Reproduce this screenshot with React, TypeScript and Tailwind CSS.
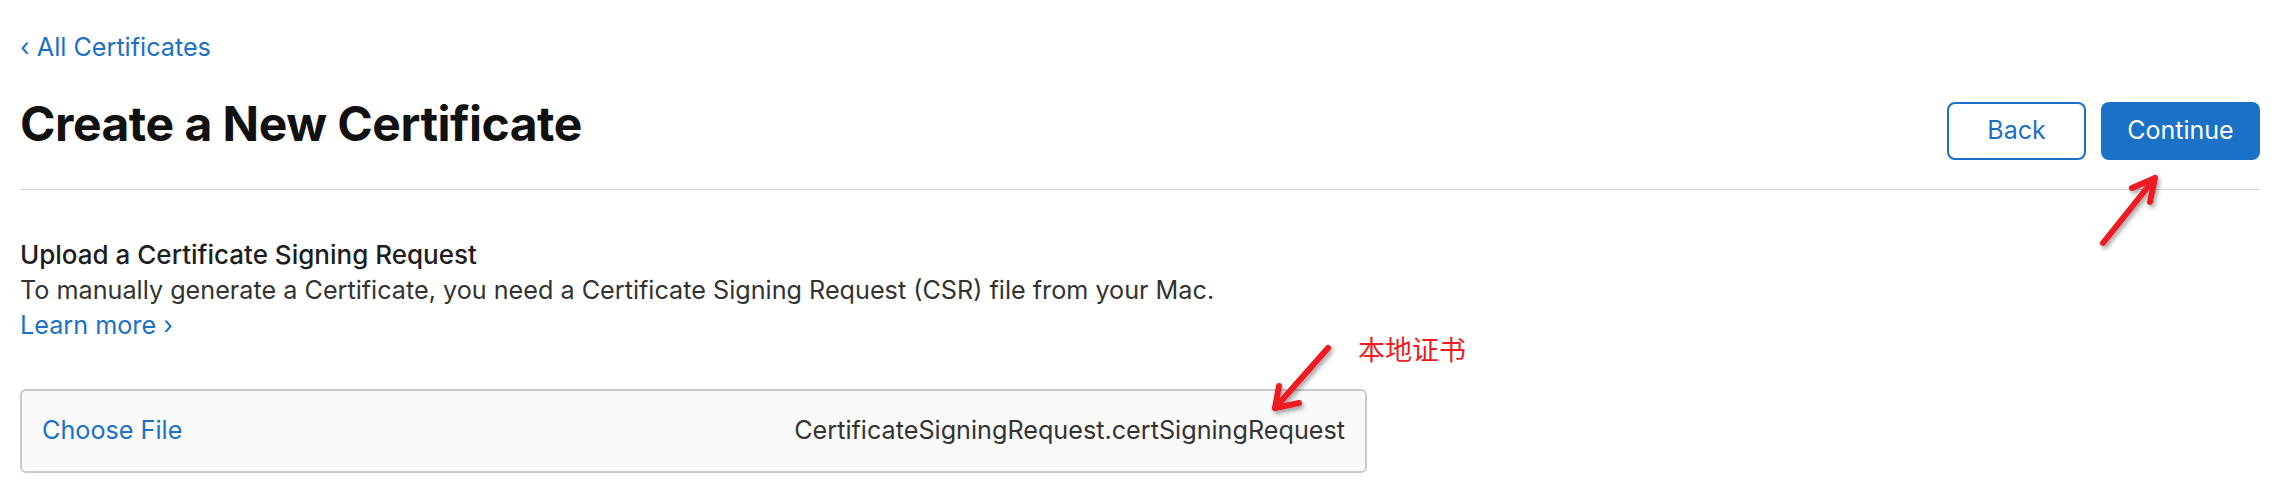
import React from 'react';

const blue = 'text-[#1a71c6]';

function Arrows() {
  return (
    <svg
      className="pointer-events-none absolute left-0 top-0"
      width="2292"
      height="504"
      viewBox="0 0 2292 504"
    >
      <defs>
        <filter id="shadow" x="-20%" y="-20%" width="140%" height="140%">
          <feDropShadow dx="2" dy="3" stdDeviation="2" floodColor="#000" floodOpacity="0.35" />
        </filter>
      </defs>
      <g
        stroke="#ec1c24"
        strokeWidth="6"
        strokeLinecap="round"
        strokeLinejoin="round"
        fill="none"
        filter="url(#shadow)"
      >
        {/* arrow to Continue */}
        <path d="M2103 243 L2155 178" />
        <path d="M2132 188 L2155 178 L2150 202" />
        {/* arrow to file name */}
        <path d="M1328 348 L1275 408" />
        <path d="M1279 386 L1275 408 L1299 403" />
      </g>
    </svg>
  );
}

export default function App() {
  return (
    <div
      className="relative min-h-[504px] w-[2292px] overflow-hidden bg-white pl-[20px] pr-[32px] pt-[30px]"
      style={{ fontFamily: 'Inter, "Noto Sans CJK SC", sans-serif' }}
    >
      {/* back link */}
      <a className={`block text-[25.2px] leading-[35px] ${blue}`}>‹ All Certificates</a>

      {/* header */}
      <div className="mt-[34px] flex items-start justify-between">
        <h1 className="text-[48px] font-bold leading-[50px] tracking-[-0.5px] text-[#111]">
          Create a New Certificate
        </h1>
        <div className="mt-[3px] flex gap-[15px]">
          <button className="h-[58px] w-[139px] rounded-[8px] border-2 border-[#1a71c6] bg-white text-[25px] text-[#1a71c6]">
            Back
          </button>
          <button className="h-[58px] w-[159px] rounded-[8px] bg-[#1a71c6] text-[25px] text-white">
            Continue
          </button>
        </div>
      </div>

      <div className="mt-[29px] h-px bg-[#d6d6d6]" />

      {/* CSR section */}
      <div className="mt-[47px] text-[25.2px] leading-[35.5px]">
        <p className="text-[26px] font-medium text-[#1d1d1f]">Upload a Certificate Signing Request</p>
        <p className="text-[#333]">
          To manually generate a Certificate, you need a Certificate Signing Request (CSR) file from your Mac.
        </p>
        <a className={`block ${blue}`}>Learn more ›</a>
      </div>

      <div className="mt-[45px] flex h-[84px] w-[1347px] items-center justify-between rounded-[6px] border-2 border-[#cacaca] bg-[#fafafa] px-[20px] text-[25.2px]">
        <span className={blue}>Choose File</span>
        <span className="text-[#333]">CertificateSigningRequest.certSigningRequest</span>
      </div>

      {/* annotation */}
      <span className="absolute left-[1358px] top-[334px] text-[27px] leading-[34px] text-[#ec1c24]">
        本地证书
      </span>
      <Arrows />
    </div>
  );
}
